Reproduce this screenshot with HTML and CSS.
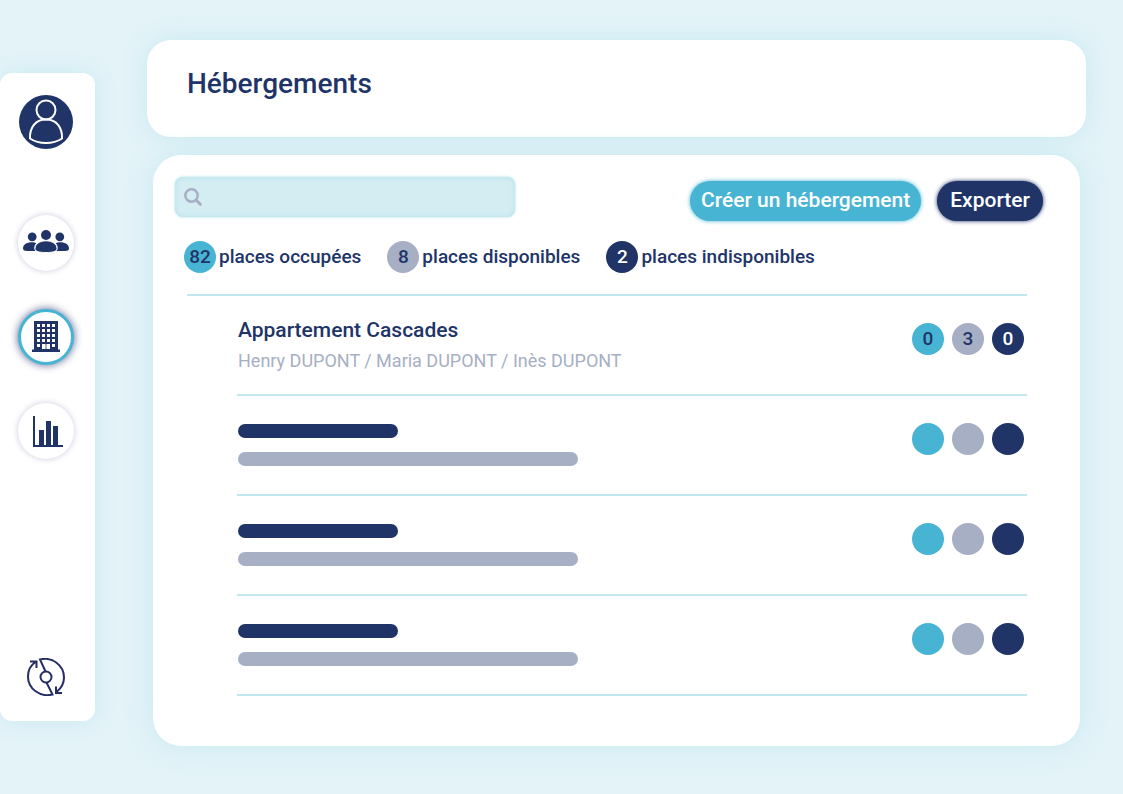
FILE: index.html
```html
<!DOCTYPE html>
<html lang="fr">
<head>
<meta charset="utf-8">
<meta name="viewport" content="width=device-width, initial-scale=1">
<title>Hébergements</title>
<link rel="stylesheet" href="styles.css">
</head>
<body>
<div class="app">
  <nav class="sidebar" aria-label="Navigation principale">
    <a class="avatar" href="#profil" aria-label="Profil">
      <svg viewBox="0 0 54 54" width="54" height="54" fill="none" stroke="#fff" stroke-width="2">
        <circle cx="27" cy="15" r="9.500"/>
        <path d="M27 24.500C16 24.500 10.500 33 11 43.500C20 49.500 34 49.500 43 43.500C43.500 33 38 24.500 27 24.500Z" stroke-linejoin="round"/>
      </svg>
    </a>
    <div class="menu">
      <a class="menu-item" href="#personnes" aria-label="Personnes">
        <svg viewBox="0 0 46 26" width="46" height="26" fill="#203468">
          <circle cx="9.200" cy="6.800" r="4.400"/>
          <circle cx="36.800" cy="6.800" r="4.400"/>
          <path d="M0 18.500C0 14.500 4 12.300 8.500 12.300C10.500 12.300 12 12.600 13.300 13.300C11.200 15 10.800 17.500 12.200 21H4C1.500 21 0 20.200 0 18.500Z"/>
          <path d="M46 18.500C46 14.500 42 12.300 37.500 12.300C35.500 12.300 34 12.600 32.700 13.300C34.800 15 35.200 17.500 33.800 21H42C44.500 21 46 20.200 46 18.500Z"/>
          <circle cx="23" cy="5" r="5"/>
          <path stroke="#fff" d="M12 18.500C12 14 17 10.800 23 10.800S34 14 34 18.500C34 21.500 30 22.500 23 22.500S12 21.500 12 18.500Z"/>
        </svg>
      </a>
      <a class="menu-item menu-item-active" href="#hebergements" aria-label="Hébergements" aria-current="page">
        <svg viewBox="0 0 28 32" width="28" height="32">
          <path fill="#203468" d="M2 0H26V28.500H28V31H0V28.500H2Z"/>
          <path fill="none" stroke="#fff" stroke-width="3" stroke-dasharray="3 2" d="M5 4.500H23M5 9.500H23M5 14.500H23M5 19.500H23M5 24.500H8M20 24.500H23"/>
          <path fill="#fff" d="M10 23H13.600V28H10ZM14.400 23H18V28H14.400Z"/>
        </svg>
      </a>
      <a class="menu-item" href="#statistiques" aria-label="Statistiques">
        <svg viewBox="0 0 34 31" width="34" height="31" fill="#203468">
          <path d="M4 0H6V29H34V31H4ZM10 14H15V29H10ZM17 5H22V29H17ZM24 10H29V29H24Z"/>
        </svg>
      </a>
    </div>
    <a class="sync" href="#actualiser" aria-label="Actualiser">
      <svg viewBox="0 0 38 38" width="38" height="38" fill="none" stroke="#252d66" stroke-width="2">
        <circle cx="19" cy="19" r="5.500"/>
        <path d="M18.500 13.500L13 1.500C25 -1.500 37 7 37 19.500C37 25.500 34.500 30 29.500 34M19.500 24.500L25.500 36.500C13 39.500 1 31 1 18.500C1 12.500 4 7 8.500 4M3 3.500H9.500V10M35 35H29V28.500"/>
      </svg>
    </a>
  </nav>

  <main class="content">
    <header class="page-header">
      <h1 class="page-title">Hébergements</h1>
    </header>

    <section class="panel">
      <div class="toolbar">
        <label class="search">
          <svg class="search-icon" viewBox="0 0 18 18" width="18" height="18" fill="none" stroke="#a6adc4" stroke-width="2.400" stroke-linecap="round">
            <circle cx="7.500" cy="7.500" r="6.200"/>
            <path stroke-width="3" d="M12.500 12.500L16.300 16.300"/>
          </svg>
          <input class="search-input" type="search" aria-label="Rechercher un hébergement">
        </label>
        <div class="actions">
          <button class="button button-create" type="button">Créer un hébergement</button>
          <button class="button button-export" type="button">Exporter</button>
        </div>
      </div>

      <ul class="stats">
        <li class="stat"><span class="badge badge-busy">82</span>places occupées</li>
        <li class="stat"><span class="badge badge-free">8</span>places disponibles</li>
        <li class="stat"><span class="badge badge-off">2</span>places indisponibles</li>
      </ul>

      <ul class="list">
        <li class="row">
          <div class="row-text">
            <h2 class="row-title">Appartement Cascades</h2>
            <p class="row-people">Henry DUPONT / Maria DUPONT / Inès DUPONT</p>
          </div>
          <div class="badges">
            <span class="badge badge-busy">0</span><span class="badge badge-free">3</span><span class="badge badge-off">0</span>
          </div>
        </li>
        <li class="row">
          <div class="row-bars"><span class="bar bar-title"></span><span class="bar bar-people"></span></div>
          <div class="badges"><span class="badge badge-busy"></span><span class="badge badge-free"></span><span class="badge badge-off"></span></div>
        </li>
        <li class="row">
          <div class="row-bars"><span class="bar bar-title"></span><span class="bar bar-people"></span></div>
          <div class="badges"><span class="badge badge-busy"></span><span class="badge badge-free"></span><span class="badge badge-off"></span></div>
        </li>
        <li class="row">
          <div class="row-bars"><span class="bar bar-title"></span><span class="bar bar-people"></span></div>
          <div class="badges"><span class="badge badge-busy"></span><span class="badge badge-free"></span><span class="badge badge-off"></span></div>
        </li>
      </ul>
    </section>
  </main>
</div>
</body>
</html>
```
FILE: styles.css
```css
:root {
  --navy: #203468;
  --cyan: #48b4d3;
  --grey: #a6afc4;
  --line: #c3e7ee;
  --shadow: #c8e9f0;
}

* {
  box-sizing: border-box;
}

body {
  margin: 0;
  background: #e3f3f8;
  color: var(--navy);
  font-family: Roboto, "Liberation Sans", sans-serif;
}

h1, h2, p, ul {
  margin: 0;
  padding: 0;
}

ul {
  list-style: none;
}

svg {
  display: block;
}

.app {
  display: flex;
  gap: 52px;
  min-height: 100vh;
}

/* Sidebar */
.sidebar {
  flex: none;
  display: flex;
  flex-direction: column;
  align-items: center;
  width: 95px;
  margin: 73px 0;
  padding: 22px 3px 25px 0;
  border-radius: 12px;
  background: #fff;
  box-shadow: 0 0 20px var(--shadow);
}

.avatar {
  border-radius: 50%;
  background: var(--navy);
}

.menu {
  display: flex;
  flex-direction: column;
  align-items: center;
  gap: 38px;
  margin-top: 66px;
}

.menu-item {
  display: grid;
  place-items: center;
  width: 56px;
  height: 56px;
  border-radius: 50%;
  background: #fff;
  box-shadow: 0 0 6px #c9cbdc;
}

.menu-item-active {
  border: 3px solid var(--cyan);
  box-shadow: 0 0 8px #56628f;
}

.sync {
  margin-top: auto;
}

/* Page */
.content {
  flex: 1;
  min-width: 0;
  padding: 40px 37px 48px 0;
}

.page-header {
  padding: 26px 40px 35px;
  border-radius: 24px;
  background: #fff;
  box-shadow: 0 0 24px var(--shadow);
}

.page-title {
  font-size: 28px;
  font-weight: 500;
  line-height: 36px;
}

.panel {
  margin: 18px 6px 0;
  padding: 22px 37px 50px 22px;
  border-radius: 28px;
  background: #fff;
  box-shadow: 0 0 28px var(--shadow);
}

.toolbar {
  display: flex;
  flex-wrap: wrap;
  justify-content: space-between;
  gap: 16px;
}

.search {
  display: flex;
  align-items: center;
  gap: 8px;
  width: 340px;
  height: 40px;
  padding: 0 9px;
  border-radius: 8px;
  background: #d4edf3;
  box-shadow: inset 0 0 5px #b1dfe8, 0 0 3px #b1dfe8;
}

.search-icon {
  flex: none;
}

.search-input {
  flex: 1;
  min-width: 0;
  border: 0;
  outline: 0;
  background: transparent;
  color: inherit;
  font: inherit;
}

.actions {
  display: flex;
  gap: 16px;
  padding-top: 4px;
}

.button {
  height: 40px;
  padding: 0 11px 3px;
  border: 0;
  border-radius: 20px;
  color: #fff;
  font: 500 21px/28px Roboto, "Liberation Sans", sans-serif;
}

.button-create {
  background: var(--cyan);
  box-shadow: 0 0 4px var(--cyan);
}

.button-export {
  padding: 0 13px 3px;
  background: var(--navy);
  box-shadow: 0 0 4px var(--navy);
}

.stats {
  display: flex;
  flex-wrap: wrap;
  gap: 8px 26px;
  margin: 20px 0 0 9px;
}

.stat {
  display: flex;
  align-items: center;
  gap: 3px;
  font-size: 19px;
  font-weight: 500;
  line-height: 32px;
}

.badge {
  flex: none;
  width: 32px;
  height: 32px;
  border-radius: 50%;
  font-size: 19px;
  font-weight: 500;
  line-height: 32px;
  text-align: center;
}

.badge-busy {
  background: var(--cyan);
}

.badge-free {
  background: var(--grey);
}

.badge-off {
  background: var(--navy);
  color: #fff;
}

/* Accommodation list */
.list {
  margin: 21px 16px 0 12px;
  padding-left: 50px;
  border-top: 2px solid var(--line);
}

.row {
  display: flex;
  justify-content: space-between;
  gap: 16px;
  min-height: 100px;
  padding: 20px 3px 18px 1px;
  border-bottom: 2px solid var(--line);
}

.row-title {
  font-size: 21px;
  font-weight: 500;
  line-height: 28px;
}

.row-people {
  margin-top: 3px;
  color: var(--grey);
  font-size: 18px;
  line-height: 28px;
}

.row-bars {
  display: flex;
  flex: 1;
  flex-direction: column;
  gap: 14px;
  padding-top: 8px;
}

.bar {
  height: 14px;
  border-radius: 7px;
}

.bar-title {
  width: 160px;
  background: var(--navy);
}

.bar-people {
  width: 340px;
  max-width: 100%;
  background: var(--grey);
}

.badges {
  display: flex;
  gap: 8px;
  padding-top: 7px;
}
```
